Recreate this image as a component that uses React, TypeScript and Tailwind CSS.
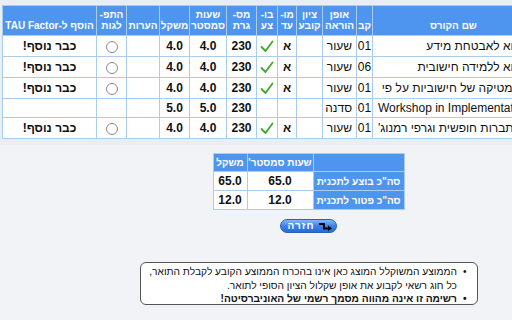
import React from "react";

type Row = {
  num: string;
  name: string;
  ltr?: boolean;
  grp: string;
  type: string;
  moed: string;
  done: boolean;
  frame: string;
  hours: string;
  weight: string;
  dist: boolean;
  tau: string;
  tall: boolean;
};

const rows: Row[] = [
  { num: "0368-3065", name: "מבוא לאבטחת מידע", grp: "01", type: "שעור", moed: "א", done: true, frame: "230", hours: "4.0", weight: "4.0", dist: true, tau: "כבר נוסף!", tall: true },
  { num: "0368-3235", name: "מבוא ללמידה חישובית", grp: "06", type: "שעור", moed: "א", done: true, frame: "230", hours: "4.0", weight: "4.0", dist: true, tau: "כבר נוסף!", tall: true },
  { num: "0368-3500", name: "מתמטיקה של חישוביות על פי מודלים", grp: "01", type: "שעור", moed: "א", done: true, frame: "230", hours: "4.0", weight: "4.0", dist: true, tau: "כבר נוסף!", tall: true },
  { num: "0368-3510", name: "Workshop in Implementation of Algorithms", ltr: true, grp: "01", type: "סדנה", moed: "", done: false, frame: "230", hours: "5.0", weight: "5.0", dist: false, tau: "", tall: false },
  { num: "0366-4989", name: "הסתברות חופשית וגרפי רמנוג'אן", grp: "01", type: "שעור", moed: "א", done: true, frame: "230", hours: "4.0", weight: "4.0", dist: true, tau: "כבר נוסף!", tall: true },
];

const th =
  "bg-[#4d95ee] text-white font-bold text-[10px] leading-[11px] align-bottom pb-[4px] border border-[#a9cdeb] text-center px-0 whitespace-nowrap overflow-hidden";
const td = "border border-[#a9cdeb] bg-white text-[12px] text-center px-0 text-[#111] whitespace-nowrap";
const heb = "text-[10.5px]";

function Check() {
  return (
    <svg width="14" height="13" viewBox="0 0 14 13" className="inline-block align-middle">
      <path d="M1.5 7 L5.5 11 L12.5 1.5" fill="none" stroke="#3faa2c" strokeWidth="1.8" strokeLinecap="round" strokeLinejoin="round" />
    </svg>
  );
}

function Radio() {
  return <span className="inline-block w-[12px] h-[12px] rounded-full border border-[#8a8a8a] bg-white align-middle" />;
}

function BackArrow() {
  return (
    <svg width="15" height="9" viewBox="0 0 15 9">
      <path d="M1 2 H6 V6.5 H12" fill="none" stroke="#000" strokeWidth="2" />
      <path d="M10 3.5 L14 6.5 L10 9 Z" fill="#000" />
    </svg>
  );
}

const sumTh = "bg-[#4d95ee] border border-[#a9cdeb] text-white font-bold text-[10px] text-center whitespace-nowrap";

export default function App() {
  return (
    <div className="w-[512px] h-[320px] overflow-hidden bg-[#f1f3f6] font-['Liberation_Sans',Arial,sans-serif]">
      <div dir="rtl" className="w-[617px]">
        {/* course list */}
        <div className="bg-[#e9eef5] pt-[5px] pb-[6px] px-[3px]">
          <table className="table-fixed border-collapse w-[611px]">
            <colgroup>
              <col className="w-[79px]" />
              <col className="w-[162px]" />
              <col className="w-[16px]" />
              <col className="w-[34px]" />
              <col className="w-[26px]" />
              <col className="w-[19px]" />
              <col className="w-[21px]" />
              <col className="w-[30px]" />
              <col className="w-[37px]" />
              <col className="w-[30px]" />
              <col className="w-[33px]" />
              <col className="w-[30px]" />
              <col className="w-[94px]" />
            </colgroup>
            <thead>
              <tr className="h-[30px]">
                <th className={th}>מס' קורס</th>
                <th className={th}>שם הקורס</th>
                <th className={th}>קב</th>
                <th className={th}>אופן<br />הוראה</th>
                <th className={th}>ציון<br />קובע</th>
                <th className={th}>מו-<br />עד</th>
                <th className={th}>בו-<br />צע</th>
                <th className={th}>מס-<br />גרת</th>
                <th className={th}>שעות<br />סמסטר</th>
                <th className={th}>משקל</th>
                <th className={th}>הערות</th>
                <th className={th}>התפ-<br />לגות</th>
                <th className={th}>הוסף ל-TAU Factor</th>
              </tr>
            </thead>
            <tbody>
              {rows.map((r, i) => (
                <tr key={i} className={r.tall ? "h-[21px]" : "h-[18px]"}>
                  <td className={td}>{r.num}</td>
                  <td className={`${td} px-[5px]`}>
                    <div
                      dir={r.ltr ? "ltr" : "rtl"}
                      className={`overflow-hidden whitespace-nowrap text-[12px] ${r.ltr ? "text-left" : "text-right"}`}
                    >
                      {r.name}
                    </div>
                  </td>
                  <td className={td}>{r.grp}</td>
                  <td className={`${td} ${heb} text-right pr-[4px]`}>{r.type}</td>
                  <td className={td}></td>
                  <td className={`${td} ${heb} font-bold`}>{r.moed}</td>
                  <td className={td}>{r.done ? <Check /> : null}</td>
                  <td className={`${td} font-bold`}>{r.frame}</td>
                  <td className={`${td} font-bold`}>{r.hours}</td>
                  <td className={`${td} font-bold`}>{r.weight}</td>
                  <td className={td}></td>
                  <td className={td}>{r.dist ? <Radio /> : null}</td>
                  <td className={`${td} ${heb} font-bold`}>{r.tau}</td>
                </tr>
              ))}
            </tbody>
          </table>
        </div>

        {/* totals */}
        <table className="table-fixed border-collapse w-[191px] mx-auto mt-[8px]">
          <colgroup>
            <col className="w-[91px]" />
            <col className="w-[66px]" />
            <col className="w-[34px]" />
          </colgroup>
          <thead>
            <tr className="h-[18px]">
              <th className={sumTh}></th>
              <th className={sumTh}>שעות סמסטר'</th>
              <th className={sumTh}>משקל</th>
            </tr>
          </thead>
          <tbody>
            <tr className="h-[18px]">
              <td className={sumTh}>סה"כ בוצע לתכנית</td>
              <td className={`${td} font-bold`}>65.0</td>
              <td className={`${td} font-bold`}>65.0</td>
            </tr>
            <tr className="h-[18px]">
              <td className={sumTh}>סה"כ פטור לתכנית</td>
              <td className={`${td} font-bold`}>12.0</td>
              <td className={`${td} font-bold`}>12.0</td>
            </tr>
          </tbody>
        </table>

        {/* back button */}
        <div className="flex justify-center mt-[9px]">
          <button
            dir="ltr"
            className="w-[57px] h-[14px] rounded-full border border-[#2a5fb8] bg-gradient-to-b from-[#86b8f6] via-[#3d80e6] to-[#2c6bd3] flex items-center justify-center gap-[4px] pl-[4px]"
          >
            <span dir="rtl" className="text-white font-bold text-[10px] leading-none tracking-[1px]">חזרה</span>
            <BackArrow />
          </button>
        </div>

        {/* notes */}
        <div className="w-[338px] mx-auto mt-[29px] h-[43px] bg-white border border-[#555] rounded-[6px] pt-[2px] pr-[10px] pl-[4px] text-[10.2px] leading-[13.5px] text-[#111] whitespace-nowrap">
          <div className="flex gap-[6px]">
            <span>•</span>
            <span>
              הממוצע המשוקלל המוצג כאן אינו בהכרח הממוצע הקובע לקבלת התואר,
              <br />
              כל חוג רשאי לקבוע את אופן שקלול הציון הסופי לתואר.
            </span>
          </div>
          <div className="flex gap-[6px] font-bold">
            <span>•</span>
            <span>רשימה זו אינה מהווה מסמך רשמי של האוניברסיטה!</span>
          </div>
        </div>
      </div>
    </div>
  );
}
